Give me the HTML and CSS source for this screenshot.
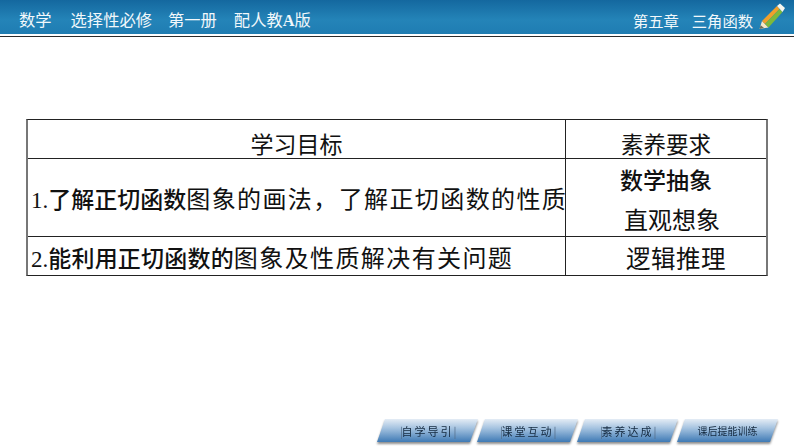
FILE: index.html
```html
<!DOCTYPE html>
<html lang="zh-CN">
<head>
<meta charset="utf-8">
<title>学习目标</title>
<link rel="stylesheet" href="styles.css">
</head>
<body>
<div class="page">
  <header class="top">
    <div class="crumbs"><span class="c1">数学</span><span class="c2">选择性必修</span><span class="c3">第一册</span><span>配人教<b class="latin">A</b>版</span></div>
    <div class="chapter"><span>第五章</span><span>三角函数</span>
      <svg class="pencil" width="30" height="30" viewBox="0 0 30 30">
        <path d="M0.5 28 L3 20 L9.5 26.5 Z" fill="#f5e6c8"/>
        <path d="M0.5 28 L1.7 24.2 L5 27 Z" fill="#6b6b5a"/>
        <path d="M3 20 L18 5 L20.5 8 L6 23 Z" fill="#f0a02c"/>
        <path d="M6 23 L20.5 8 L23.5 11 L9.5 26.5 Z" fill="#7db93c"/>
        <path d="M18 5 L21 2.5 L26 7 L23.5 11 Z" fill="#f6f6ef"/>
      </svg>
    </div>
  </header>
  <main class="content">
    <table class="goals">
      <colgroup><col class="col-a"><col class="col-b"></colgroup>
      <tr class="row-head">
        <td class="center head-cell">学习目标</td>
        <td class="center head-cell head-side">素养要求</td>
      </tr>
      <tr class="row-one">
        <td class="goal goal-first"><span class="latin-num">1.</span><strong>了解正切函数</strong><span class="wide-run">图象的画法，了解正切函数的性质</span></td>
        <td class="center stack"><strong>数学抽象</strong><span class="shift-b">直观想象</span></td>
      </tr>
      <tr class="row-two">
        <td class="goal goal-low"><span class="latin-num">2.</span><strong class="tight">能利用正切函数的</strong><span class="wide-run">图象及性质解决有关问题</span></td>
        <td class="center goal-low"><span class="spaced">逻辑推理</span></td>
      </tr>
    </table>
  </main>
  <nav class="tabs">
    <a class="tab"><i class="bar">|</i><span class="tab-text">自学导引</span><i class="bar">|</i></a>
    <a class="tab"><i class="bar">|</i><span class="tab-text">课堂互动</span><i class="bar">|</i></a>
    <a class="tab"><i class="bar">|</i><span class="tab-text">素养达成</span><i class="bar">|</i></a>
    <a class="tab tab-small">课后提能训练</a>
  </nav>
</div>
</body>
</html>
```
FILE: styles.css
```css
* { box-sizing: border-box; }
html, body { margin: 0; padding: 0; }
body {
  width: 794px;
  height: 447px;
  overflow: hidden;
  background: #fff;
  font-family: "Noto Sans CJK SC", "Liberation Serif", sans-serif;
  color: #111;
}
.page { display: flex; flex-direction: column; height: 447px; }
.top {
  height: 37px;
  flex: none;
  display: flex;
  align-items: flex-start;
  justify-content: space-between;
  padding: 0 5px 0 19px;
  background: linear-gradient(#14689f 0, #2484b8 20px, #1f7db2 34px, #fff 34px, #fff 36px, #2b2b2b 36px);
  color: #f2f8fb;
  line-height: 20px;
}
.crumbs { display: flex; font-size: 16.3px; padding-top: 9px; }
.c1 { margin-right: 19px; }
.c2 { margin-right: 16px; }
.c3 { margin-right: 17px; }
.chapter { display: flex; gap: 13px; padding-top: 10px; position: relative; padding-right: 36px; font-size: 15.3px; }
.latin { font-family: "Liberation Serif", serif; font-weight: bold; }
.pencil { position: absolute; right: 0; top: 1px; }
.content { flex: none; padding: 82px 26px 0; }
.goals {
  width: 742px;
  table-layout: fixed;
  border-collapse: separate;
  border-spacing: 0;
  border-top: 1px solid #222;
  border-bottom: 1px solid #222;
  border-left: 2px solid #777;
  border-right: 2px solid #777;
  font-size: 23px;
}
.col-a { width: 538px; }
.goals td { padding: 0; border-right: 1px solid #222; border-bottom: 1px solid #222; white-space: nowrap; }
.goals td:last-child { border-right: 0; }
.goals tr:last-child td { border-bottom: 0; }
.row-head { height: 39px; }
.row-one { height: 78px; }
.row-two { height: 38px; }
.center { text-align: center; }
.goals .head-cell { line-height: 28px; padding-top: 8px; }
.head-side { font-size: 22.5px; }
.goals .goal { padding-left: 3px; line-height: 30px; }
.goals .goal-first { padding-top: 4px; }
.goals .goal-low { padding-top: 4px; line-height: 24px; }
.latin-num { font-family: "Liberation Serif", serif; }
.goal strong { font-weight: 500; }
.goal .tight { letter-spacing: 0.2px; }
.wide-run { font-size: 24px; letter-spacing: 1.4px; }
.goals .stack { padding-top: 1px; padding-bottom: 2px; }
.stack strong, .stack span { display: block; }
.stack strong { font-weight: 500; line-height: 38px; }
.shift-b { margin: 6px 0 0 12px; font-size: 24px; line-height: 30px; }
.spaced { display: inline-block; letter-spacing: 0.5px; margin-left: 20px; font-size: 24.5px; }
.tabs { margin-top: auto; display: flex; padding: 0 16px 5px 377px; filter: drop-shadow(0 2px 1px #8f8f8f); }
.tab {
  flex: none;
  width: 101px;
  margin-right: -1px;
  height: 23px;
  display: flex;
  align-items: center;
  justify-content: center;
  clip-path: polygon(8px 0, 100% 0, 93px 100%, 0 100%);
  background: linear-gradient(#e4ecf5 0, #a5c3e0 40%, #3f7ab5 100%);
  font-size: 11px;
  color: #14293f;
}
.tab:last-child { margin-right: 0; }
.tab-text { letter-spacing: 2px; }
.bar { font-style: normal; letter-spacing: -1.5px; color: #56708c; }
.tab-small { font-size: 10px; }
```
